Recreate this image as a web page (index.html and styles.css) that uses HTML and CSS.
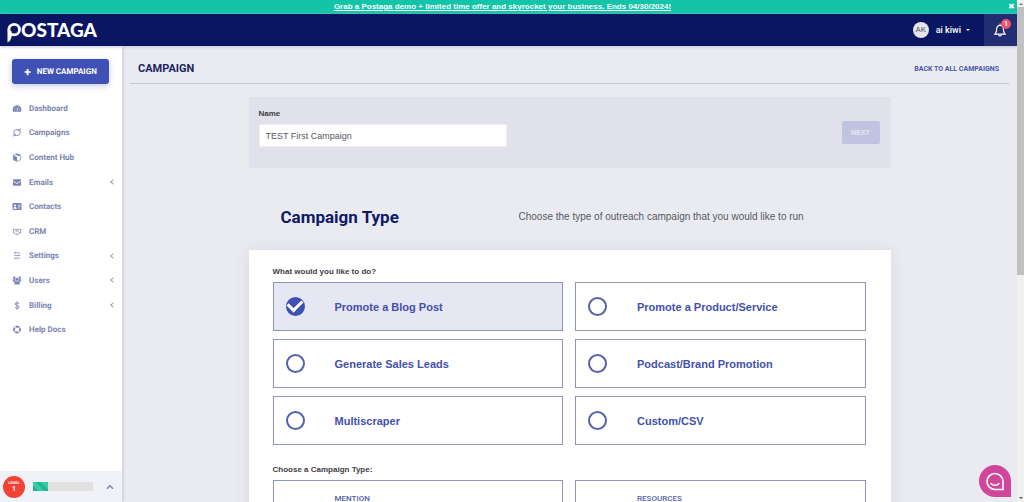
FILE: index.html
```html
<!DOCTYPE html>
<html lang="en">
<head>
<meta charset="utf-8">
<meta name="viewport" content="width=device-width, initial-scale=1">
<title>Postaga - Campaign</title>
<link rel="stylesheet" href="styles.css">
</head>
<body>
<div class="app">
  <div class="promo">
    <a class="promo-link" href="#">Grab a Postaga demo + limited time offer and skyrocket your business. Ends 04/30/2024!</a>
    <button class="promo-close" type="button" aria-label="Close">✖</button>
  </div>
  <header class="topbar">
    <a class="brand" href="#" aria-label="Postaga">
      <svg class="brand-pin" viewBox="0 0 14 21" aria-hidden="true"><circle cx="7.2" cy="7.600" r="5.300" fill="none" stroke="#fff" stroke-width="2.800"/><path d="M.5 7.400v13c2-.6 3.400-3 4.200-6L4.400 9z" fill="#fff"/></svg>
      <span class="brand-text">OSTAGA</span>
    </a>
    <div class="account">
      <span class="avatar">AK</span>
      <button class="user" type="button">ai kiwi <span class="caret"></span></button>
      <button class="bell" type="button" aria-label="Notifications">
        <svg viewBox="0 0 14 14" aria-hidden="true"><path d="M1.500 11.200h11M2.700 11V9.800c.8-.8.9-1.700.9-3.600C3.600 3.900 5 2.400 7 2.400s3.400 1.500 3.400 3.800c0 1.900.1 2.800.9 3.600V11M7 2.300V1M5.800 12.300c.2.900 2.200.9 2.400 0" fill="none" stroke="#fff" stroke-width="1.200" stroke-linecap="round"/></svg>
        <span class="badge">1</span>
      </button>
    </div>
  </header>
  <div class="body">
    <aside class="sidebar">
      <button class="new" type="button"><span class="plus">+</span>NEW CAMPAIGN</button>
      <nav class="menu">
        <a href="#"><svg viewBox="0 0 10 10"><path d="M.8 8.500a4.800 4.800 0 1 1 8.400 0z" fill="currentColor"/><path d="M5 7.500L6.300 3.500M2.200 6h.8M7.300 6h.8M3 3.800l.5.500" stroke="#fff" stroke-width=".8"/></svg><span>Dashboard</span></a>
        <a href="#"><svg viewBox="0 0 10 10"><path d="M1.500 6.500C.8 3.500 3 1.300 5.500 1.600L8 2M8.500 3.500C9.200 6.500 7 8.700 4.500 8.400L2 8M9 .5L8 3.300 6 2.500M1 9.500l1-2.800 2 .8" fill="none" stroke="currentColor"/></svg><span>Campaigns</span></a>
        <a href="#"><svg viewBox="0 0 10 10"><path d="M5 .7L9 2.500v5L5 9.400 1 7.500v-5z" fill="none" stroke="currentColor" stroke-width=".8"/><path d="M1 2.600l4 1.900v4.900L1 7.500zM3 1.600L5 .7l4 1.800-2 1z" fill="currentColor"/></svg><span>Content Hub</span></a>
        <a href="#"><svg viewBox="0 0 10 10"><rect x=".5" y="1.500" width="9" height="7" rx=".8" fill="currentColor"/><path d="M.5 3.200L5 6.200l4.500-3" fill="none" stroke="#fff" stroke-width=".9"/></svg><span>Emails</span><i class="chev"></i></a>
        <a href="#"><svg viewBox="0 0 10 10"><rect y="1.200" width="10" height="7.600" rx=".7" fill="currentColor"/><path d="M1.300 7.200c0-2 3-2 3 0zM6 3.600h3M6 5.200h3M6 6.800h2" stroke="#fff" stroke-width=".7" fill="#fff"/><circle cx="2.800" cy="3.900" r="1.100" fill="#fff"/></svg><span>Contacts</span></a>
        <a href="#"><svg viewBox="0 0 10 10"><path d="M0 3.200L2 2.500l2 .5 1.500-.6L8 2.500l2 .7M.3 6.300l1.200.2L4 8.300l1.500.2L8.500 6.300h1.300M5.500 2.800L3.500 4.500c.7.900 1.500.3 2.200-.4l2.500 2.400M4.500 6.500l1.200 1.200M1.200 3v3.300M8.800 3v3.300" fill="none" stroke="currentColor" stroke-width=".8"/></svg><span>CRM</span></a>
        <a href="#"><svg viewBox="0 0 10 10"><path d="M1.500 2h7M1.500 5h7M1.500 8h7M3.300 1v2M6.800 4v2M4 7v2" fill="none" stroke="currentColor" stroke-width=".8"/></svg><span>Settings</span><i class="chev"></i></a>
        <a href="#"><svg viewBox="0 0 10 10" fill="currentColor"><circle cx="2" cy="2" r="1.400"/><circle cx="8" cy="2" r="1.400"/><circle cx="5" cy="3.600" r="1.700"/><path d="M0 3.600h2.800l.7 2L2.500 6.500H.8zM10 3.600H7.200l-.7 2 1 .9h1.700zM2 9.500V7.400c0-2.200 6-2.200 6 0v2.100z"/></svg><span>Users</span><i class="chev"></i></a>
        <a href="#"><svg viewBox="0 0 10 10"><path d="M7.200 3.300C6.800 1.500 3 1.400 3 3.300c0 2.100 4.300 1.200 4.300 3.400 0 2-4.200 2-4.500-.1M5 .5v9" fill="none" stroke="currentColor"/></svg><span>Billing</span><i class="chev"></i></a>
        <a href="#"><svg viewBox="0 0 10 10"><circle cx="5" cy="5" r="3.200" fill="none" stroke="currentColor" stroke-width="2" stroke-dasharray="3.600 1.430" stroke-dashoffset="1.800"/><circle cx="5" cy="5" r="3.900" fill="none" stroke="currentColor" stroke-width=".6"/></svg><span>Help Docs</span></a>
      </nav>
      <div class="level">
        <span class="level-badge"><small>LEVEL</small><b>1</b></span>
        <div class="bar"><div class="bar-fill"></div></div>
        <button class="level-toggle" type="button" aria-label="Expand"><svg viewBox="0 0 8 6"><path d="M1 4.800L4 1.800l3 3" fill="none" stroke="#7c84b4" stroke-width="1.500"/></svg></button>
      </div>
    </aside>
    <main class="main">
      <div class="titlebar">
        <h1>CAMPAIGN</h1>
        <a href="#">BACK TO ALL CAMPAIGNS</a>
      </div>
      <div class="column">
        <form class="namebox">
          <div class="field">
            <label for="name">Name</label>
            <input id="name" type="text" value="TEST First Campaign">
          </div>
          <button class="next" type="button" disabled>NEXT</button>
        </form>
        <div class="intro">
          <h2>Campaign Type</h2>
          <p>Choose the type of outreach campaign that you would like to run</p>
        </div>
        <section class="panel">
          <fieldset>
            <legend>What would you like to do?</legend>
            <div class="options">
              <label class="option"><input type="radio" name="goal" checked><span>Promote a Blog Post</span></label>
              <label class="option"><input type="radio" name="goal"><span>Promote a Product/Service</span></label>
              <label class="option"><input type="radio" name="goal"><span>Generate Sales Leads</span></label>
              <label class="option"><input type="radio" name="goal"><span>Podcast/Brand Promotion</span></label>
              <label class="option"><input type="radio" name="goal"><span>Multiscraper</span></label>
              <label class="option"><input type="radio" name="goal"><span>Custom/CSV</span></label>
            </div>
          </fieldset>
          <h3>Choose a Campaign Type:</h3>
          <div class="options">
            <button class="type" type="button">MENTION</button>
            <button class="type" type="button">RESOURCES</button>
          </div>
        </section>
      </div>
    </main>
  </div>
</div>
<div class="scroll" aria-hidden="true"><span class="arrow up"></span><span class="thumb"></span><span class="arrow down"></span></div>
<button class="chat" type="button" aria-label="Chat">
  <svg viewBox="0 0 32 32"><path d="M16 0a16 16 0 0 0 0 32h16V16A16 16 0 0 0 16 0z" fill="#d0469a"/><path d="M16 8.500a8 8 0 0 0 0 16h8v-8a8 8 0 0 0-8-8z" fill="none" stroke="#fff" stroke-width="1.600"/><path d="M12 18.500c2 2.400 6 2.400 8 0" fill="none" stroke="#fff" stroke-width="1.600" stroke-linecap="round"/></svg>
</button>
</body>
</html>
```
FILE: styles.css
```css
* { box-sizing: border-box; }
body { margin: 0; height: 100vh; display: flex; overflow: hidden; font-family: "Liberation Sans", Arial, sans-serif; font-size: 10px; color: #3f4047; background: #eaebf0; }
button { font: inherit; border: 0; padding: 0; background: none; color: inherit; cursor: pointer; }
a { text-decoration: none; color: inherit; }
svg { display: block; }
h1, h2, h3, p { margin: 0; }

.app { flex: 1; min-width: 0; display: flex; flex-direction: column; }
.promo { flex: none; height: 14px; display: flex; align-items: center; background: #14c4a8; color: #fff; }
.promo-link { flex: 1; text-align: center; font-size: 8px; line-height: 12px; font-weight: 700; text-decoration: underline; }
.promo-close { width: 12px; font-size: 8px; line-height: 10px; }

.topbar { position: relative; z-index: 1; flex: none; height: 32px; display: flex; justify-content: space-between; background: #0a1661; color: #fff; box-shadow: 0 1px 3px #c4c6d4; }
.brand { display: flex; align-items: flex-start; padding: 8px 7px; }
.brand-pin { width: 14px; height: 21px; }
.brand-text { font-family: Lato, sans-serif; font-size: 19px; line-height: 16px; font-weight: 900; }
.account { display: flex; align-items: center; font-family: Roboto, sans-serif; }
.avatar { width: 16px; height: 16px; border-radius: 50%; background: #e4e4ea; color: #555766; font-size: 8px; line-height: 16px; text-align: center; }
.user { display: flex; align-items: center; gap: 5px; margin: 0 14px 0 7px; font-size: 9px; font-weight: 500; }
.caret { border: 2px solid transparent; border-top-color: #fff; border-bottom: 0; }
.bell { position: relative; width: 33px; height: 32px; padding-left: 9px; background: #232d71; }
.bell svg { width: 14px; height: 14px; }
.badge { position: absolute; top: 5px; right: 6px; width: 10px; height: 10px; border-radius: 50%; background: #f4516c; font-size: 7px; line-height: 10px; font-weight: 700; text-align: center; }

.body { flex: 1; min-height: 0; display: flex; }
.sidebar { flex: none; width: 122px; display: flex; flex-direction: column; background: #fff; font-family: Roboto, sans-serif; box-shadow: 1px 0 3px #c4c6d4; text-rendering: geometricPrecision; }
.sidebar button { text-rendering: inherit; }
.new { flex: none; height: 25px; margin: 13px 13px 12px 12px; border-radius: 3px; display: flex; align-items: center; justify-content: center; gap: 6px; background: #3f51b5; color: #fff; font-size: 8px; font-weight: 700; box-shadow: 0 2px 6px #c5cae9; }
.plus { font-size: 12px; line-height: 12px; }
.menu { height: 246px; margin-bottom: auto; display: grid; grid-template-rows: repeat(10, 1fr); }
.menu a { display: flex; align-items: center; padding: 0 7px 0 12px; color: #7c84b0; font-size: 8px; font-weight: 700; }
.menu svg { width: 10px; height: 9px; margin-right: 7px; }
.chev { width: 4px; height: 4px; margin-left: auto; border: solid #9a9fc0; border-width: 0 0 1px 1px; transform: rotate(45deg); }
.level { flex: none; height: 31px; display: flex; align-items: center; padding-left: 3px; background: #f0f2f7; }
.level-badge { width: 22px; height: 22px; border-radius: 50%; background: #f44336; color: #fff; display: flex; flex-direction: column; align-items: center; justify-content: center; }
.level-badge small { font-size: 4px; line-height: 5px; font-weight: 700; }
.level-badge b { font-size: 7px; line-height: 9px; }
.bar { width: 60px; height: 9px; margin-left: 8px; background: #e0e1e0; }
.bar-fill { width: 25%; height: 100%; background: repeating-linear-gradient(45deg, #1cb894 0 4px, #3cc9a8 4px 8px); }
.level-toggle { margin-left: 13px; }
.level-toggle svg { width: 8px; height: 6px; }

.main { flex: 1; min-width: 0; overflow: hidden; }
.titlebar { height: 38px; margin: 0 8px; padding: 8px 10px 0 8px; display: flex; align-items: flex-start; justify-content: space-between; border-bottom: 1px solid #c6c8d0; font-family: Roboto, sans-serif; }
.titlebar h1 { font-size: 11px; line-height: 30px; font-weight: 700; color: #1c2560; }
.titlebar a { font-size: 7px; line-height: 30px; font-weight: 700; color: #4b57a8; }
.column { max-width: 642px; margin: 13px auto 0; }
.namebox { height: 71px; padding: 0 11px 0 10px; display: flex; align-items: center; justify-content: space-between; background: #e1e1eb; }
.field { flex: none; width: 248px; display: grid; gap: 4px; padding-bottom: 10px; }
.field label { font-size: 8px; line-height: 12px; font-weight: 700; }
.field input { width: 100%; height: 23px; border: 1px solid #ebedf2; padding: 0 6px; font: inherit; font-size: 9px; color: #575962; background: #fff; }
.next { width: 38px; height: 23px; border-radius: 2px; background: #c0c4e1; color: #e6e8f5; font-size: 7px; font-weight: 700; }
.intro { height: 82px; padding: 16px 32px 0; display: grid; grid-template-columns: 238px 1fr; align-items: center; }
.intro h2 { font-family: Roboto, sans-serif; font-size: 17px; line-height: 24px; font-weight: 700; color: #0f1a66; }
.intro p { font-size: 10px; line-height: 14px; color: #575962; }
.panel { padding: 16px 25px 40px 24px; background: #fff; box-shadow: 0 0 14px #d6d8df; }
fieldset { border: 0; margin: 0; padding: 0; min-width: 0; }
legend, .panel h3 { padding: 0; font-size: 8px; line-height: 12px; font-weight: 700; color: #3f4047; }
.options { display: grid; grid-template-columns: 1fr 1fr; gap: 8px 12px; margin-top: 4px; }
.option { height: 49px; border: 1px solid #8e95b8; padding-left: 12px; display: flex; align-items: center; gap: 30px; color: #4450ae; font-size: 11px; font-weight: 700; cursor: pointer; }
.option:has(input:checked) { background: #e5e7f2; }
.option input { appearance: none; flex: none; width: 19px; height: 19px; margin: 0; border: 2px solid #5661ac; border-radius: 50%; display: grid; place-items: center; }
.option input:checked { background: #3f51b5; border-color: #3f51b5; }
.option input:checked::before { content: ""; width: 11px; height: 7px; margin-bottom: 5px; border: solid #fff; border-width: 0 0 3px 3px; transform: rotate(-45deg); }
.panel h3 { margin-top: 19px; }
.type { height: 49px; border: 1px solid #8e95b8; padding: 12px 0 0 61px; display: flex; align-items: flex-start; color: #5661ac; font-family: Roboto, sans-serif; font-size: 8px; line-height: 12px; font-weight: 500; }

.scroll { flex: none; width: 7px; display: flex; flex-direction: column; align-items: center; background: #f1f1f1; padding: 3px 0; }
.thumb { width: 7px; height: 54%; margin: 2px 0 auto; background: #c1c1c1; }
.arrow { border: 2px solid transparent; }
.up { border-bottom-color: #777; border-top: 0; }
.down { border-top-color: #555; border-bottom: 0; }
.chat { position: fixed; right: 13px; bottom: 5px; width: 32px; height: 32px; }
```
